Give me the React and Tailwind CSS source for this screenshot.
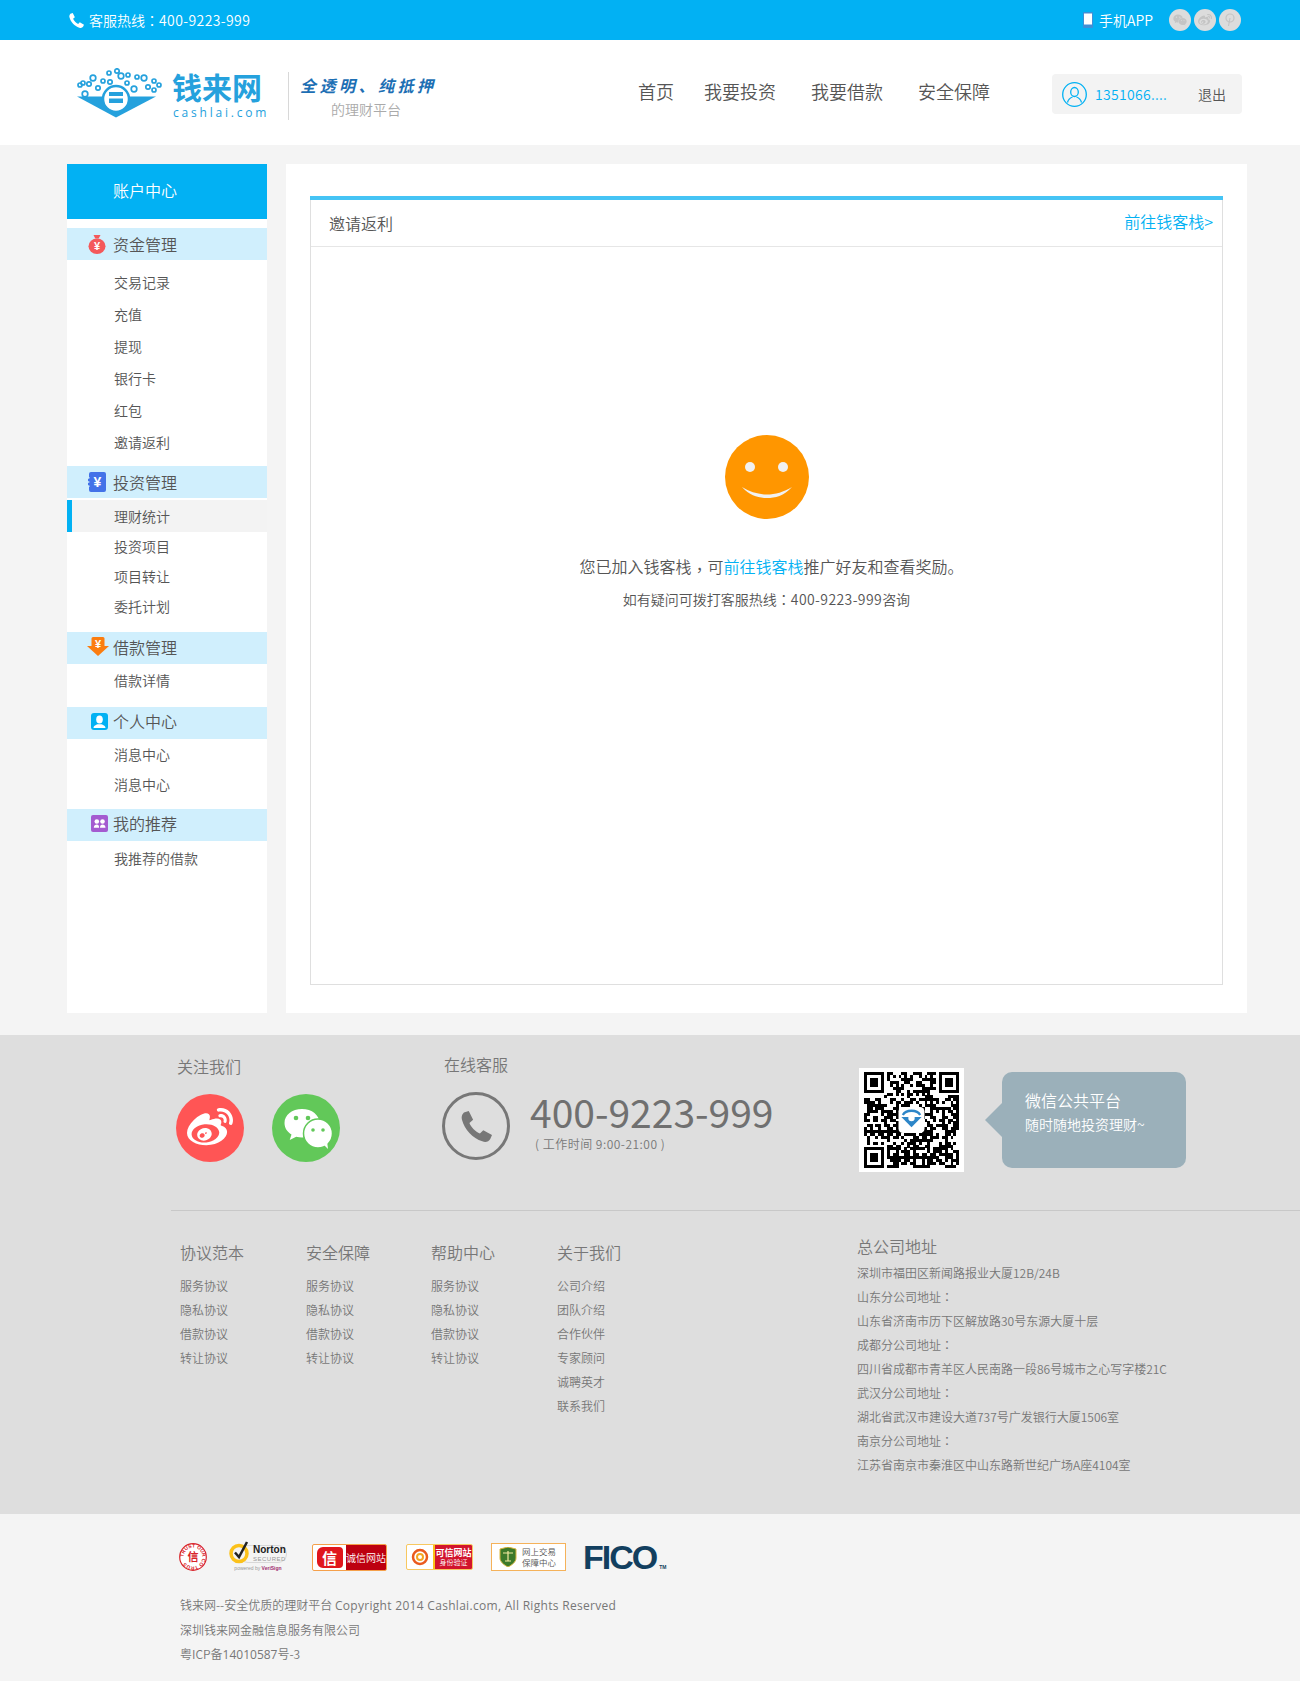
import React from 'react';
import { FaWeibo, FaWeixin } from 'react-icons/fa';

const FONT = "font-['Noto_Sans_CJK_SC','Noto_Sans',sans-serif]";

// 全角标点用 TC 字形，位置才居中
const Zh = ({ children }) => children.split(/([：，])/).map((part, i) => {
  if (part === '：') return <span key={i} className="font-['Noto_Sans_CJK_TC',sans-serif]">{part}</span>;
  if (part === '，') return <span key={i} className="font-['Noto_Sans_CJK_TC',sans-serif] align-[-3px] leading-[0]">{part}</span>;
  return part;
});

const Handset = ({ size, className }) => (
  <svg width={size} height={size} viewBox="0 0 32 32" fill="currentColor" className={className}>
    <path d="M3 1.500L8 0l4.500 9-3.800 3.500C10.500 17 15 21.500 19.500 23.300L23 19.800l9 5-1.800 4.200C28.500 32 25 32.500 22 31.300 12 28 3.500 19 1 9 .2 6 1 3.500 3 1.500z" />
  </svg>
);

const Yen = ({ x, y, size = 11, fill = '#fff' }) => (
  <text x={x} y={y} fontSize={size} fontWeight="700" fill={fill} textAnchor="middle" fontFamily="Liberation Sans, sans-serif">¥</text>
);

const BagIcon = () => (
  <svg width="18" height="20" viewBox="0 0 18 20">
    <path d="M5.500 1h7l-1.800 3.500H7.300z" fill="#f4595b" />
    <ellipse cx="9" cy="12.200" rx="8.500" ry="7.800" fill="#f4595b" />
    <Yen x={9} y={16} />
  </svg>
);

const TicketIcon = () => (
  <svg width="18" height="20" viewBox="0 0 18 20">
    <path d="M3 0h13a2 2 0 0 1 2 2v16a2 2 0 0 1-2 2H3a2 2 0 0 1-2-2v-3l1-1-2-1v-2l2-1-2-1V7l2-1-1-1V2a2 2 0 0 1 2-2z" fill="#4372e8" />
    <Yen x={9.500} y={15} size={14} />
  </svg>
);

const ArrowIcon = () => (
  <svg width="22" height="20" viewBox="0 0 22 20">
    <path d="M4.500 1.500a1.500 1.500 0 0 1 1.500-1.500h10a1.500 1.500 0 0 1 1.500 1.500v7.500h4.500l-11 10-11-10h4.500z" fill="#fb7d10" />
    <Yen x={11} y={11} size={11} />
  </svg>
);

const PersonIcon = () => (
  <svg width="17" height="17" viewBox="0 0 17 17">
    <rect width="17" height="17" rx="3" fill="#02b1f3" />
    <ellipse cx="8.500" cy="6.500" rx="3.300" ry="4" fill="#fff" />
    <path d="M2.500 15c0-2.500 2.500-3 4-3.800h4c1.500.8 4 1.300 4 3.800z" fill="#fff" />
  </svg>
);

const GroupIcon = () => (
  <svg width="17" height="17" viewBox="0 0 17 17">
    <rect width="17" height="17" rx="2" fill="#a45bd0" />
    <circle cx="5.800" cy="6.500" r="2.300" fill="#fff" />
    <circle cx="11.500" cy="6.500" r="2.300" fill="#fff" />
    <path d="M2.800 12.800c0-2.500 1.500-3.300 3-3.300s2.300.8 2.300 3.300zM9 12.800c0-2.500 1-3.300 2.500-3.300s3 .8 3 3.300z" fill="#fff" />
  </svg>
);

const menu = [
  {
    title: '资金管理', icon: <BagIcon />, iconBox: 'w-[18px] ml-[21px] mr-[7px]', head: '', wrap: 'mt-[9px]', list: 'pt-[7px]', row: 'h-8',
    items: ['交易记录', '充值', '提现', '银行卡', '红包', '邀请返利'],
  },
  {
    title: '投资管理', icon: <TicketIcon />, iconBox: 'w-[18px] ml-[21px] mr-[7px]', head: '', wrap: 'mt-[7px]', list: 'pt-[2px]', row: 'h-[30px]',
    items: ['理财统计', '投资项目', '项目转让', '委托计划'], active: '理财统计',
  },
  {
    title: '借款管理', icon: <ArrowIcon />, iconBox: 'w-[22px] ml-[20px] mr-[4px]', head: 'pb-[3px]', wrap: 'mt-[10px]', list: 'pt-[2px]', row: 'h-[30px]',
    items: ['借款详情'],
  },
  {
    title: '个人中心', icon: <PersonIcon />, iconBox: 'w-[17px] ml-[24px] mr-[5px]', head: 'pb-[4px]', wrap: 'mt-[11px]', list: 'pt-[1px]', row: 'h-[30px]',
    items: ['消息中心', '消息中心'],
  },
  {
    title: '我的推荐', icon: <GroupIcon />, iconBox: 'w-[17px] ml-[24px] mr-[5px]', head: 'pb-[4px]', wrap: 'mt-[9px]', list: 'pt-[3px]', row: 'h-[30px]',
    items: ['我推荐的借款'],
  },
];

const Sidebar = () => (
  <aside className="w-[200px] h-[849px] bg-white shrink-0">
    <div className="h-[55px] bg-[#02b1f3] text-white text-base flex items-center pl-[46px] pb-[3px]">账户中心</div>
    {menu.map((g) => (
      <div key={g.title} className={g.wrap}>
        <div className={`h-8 bg-[#d0effd] flex items-center text-base text-[#555] ${g.head}`}>
          <span className={`${g.iconBox} flex items-center`}>{g.icon}</span>
          {g.title}
        </div>
        <div className={g.list}>
          {g.items.map((it, i) => (
            g.active === it ? (
              <div key={i} className="h-8 bg-[#f3f3f3] border-l-[5px] border-[#02b1f3] pl-[42px] flex items-center text-sm text-[#555]">{it}</div>
            ) : (
              <div key={i} className={`${g.row} pl-[47px] pb-[2px] flex items-center text-sm text-[#555]`}>{it}</div>
            )
          ))}
        </div>
      </div>
    ))}
  </aside>
);

const rings = [
  [80, 85, 2], [83, 83, 2], [89, 84, 2.200], [93, 78, 2.800], [98, 88, 2.200], [103, 81, 2], [110, 82, 2.200], [109, 73, 2], [117, 71, 2.200],
  [121, 76, 2.800], [128, 75, 2], [127, 83, 2], [137, 77, 2], [144, 78, 2.800], [134, 89, 2.800], [148, 87, 2.200], [154, 81, 2], [159, 85, 2], [154, 90, 2], [85, 94, 2.800],
];

const Logo = () => (
  <div className="flex items-start">
    <svg width="90" height="52" viewBox="74 68 90 52" className="ml-[7px] mt-[28px] shrink-0">
      {rings.map(([x, y, r], i) => (
        <circle key={i} cx={x} cy={y} r={r} fill="none" stroke="#25a1dd" strokeWidth="1.700" />
      ))}
      <path d="M77 96.500h79l-40 21z" fill="#25a1dd" />
      <circle cx="116" cy="99" r="13" fill="#fff" stroke="#25a1dd" strokeWidth="2.500" />
      <rect x="109" y="92" width="14" height="11" fill="#25a1dd" />
      <rect x="109" y="96" width="14" height="2.500" fill="#fff" />
    </svg>
    <div className="ml-[8px] mt-[30px] w-[92px]">
      <div className="text-[30px] leading-[32px] font-bold text-[#25a1dd] whitespace-nowrap">钱来网</div>
      <div className="mt-[4px] pl-[1px] text-[12px] leading-[14px] tracking-[2.800px] font-normal text-[#25a1dd] font-['Open_Sans',sans-serif] whitespace-nowrap">cashlai.com</div>
    </div>
    <div className="ml-[24px] mt-[32px] w-px h-[48px] bg-[#d8d8d8]" />
    <div className="ml-[11px] mt-[34px]">
      <div className="text-[16px] leading-[22px] font-bold italic tracking-[3.500px] text-[#1d6fb4] whitespace-nowrap">全透明、纯抵押</div>
      <div className="ml-[31px] mt-[3px] text-sm leading-5 text-[#aaa] whitespace-nowrap">的理财平台</div>
    </div>
  </div>
);

const SmallCircle = ({ children }) => (
  <div className="w-[22px] h-[22px] rounded-full bg-[#dcdcdc] flex items-center justify-center text-[#c4c4c4]">{children}</div>
);

const TopBar = () => (
  <div className="h-10 bg-[#02b1f3] text-white text-sm flex items-center justify-between pl-[69px] pr-[59px]">
    <div className="flex items-center">
      <Handset size={15} className="mr-[5px]" />
      <span><Zh>客服热线：</Zh><span className="tracking-[0.400px]">400-9223-999</span></span>
    </div>
    <div className="flex items-center">
      <svg width="10" height="16" viewBox="0 0 10 16" className="mr-[6px]">
        <rect width="10" height="16" rx="1" fill="#3f8fd6" />
        <rect x="1" y="1.500" width="8" height="11" fill="#fff" />
      </svg>
      <span className="mr-[16px]">手机APP</span>
      <div className="flex gap-[3px]">
        <SmallCircle><FaWeixin size={14} /></SmallCircle>
        <SmallCircle><FaWeibo size={14} /></SmallCircle>
        <SmallCircle>
          <svg width="12" height="16" viewBox="0 0 12 16" fill="none" stroke="#c4c4c4" strokeWidth="1.200">
            <circle cx="6" cy="6" r="4" />
            <path d="M6 6l-1.500 8" />
          </svg>
        </SmallCircle>
      </div>
    </div>
  </div>
);

const Header = () => (
  <div className="h-[105px] bg-white flex justify-between pl-[67px] pr-[58px]">
    <Logo />
    <div className="flex items-center">
      <nav className="flex text-lg text-[#555] mr-[62px] -mt-[4px]">
        <span>首页</span>
        <span className="ml-[30px]">我要投资</span>
        <span className="ml-[35px]">我要借款</span>
        <span className="ml-[35px]">安全保障</span>
      </nav>
      <div className="w-[190px] h-10 bg-[#f3f3f3] rounded flex items-center pl-[10px] mt-[3px]">
        <svg width="25" height="25" viewBox="0 0 25 25" fill="none" stroke="#02b1f3" strokeWidth="1.300" className="shrink-0">
          <circle cx="12.500" cy="12.500" r="11.800" />
          <ellipse cx="12.500" cy="10" rx="3.800" ry="4.500" />
          <path d="M5.500 20.500c.8-3.500 3.500-5 5-5.500M19.500 20.500c-.8-3.500-3.500-5-5-5.500" />
        </svg>
        <span className="ml-[8px] text-sm text-[#02b1f3] tracking-[0.300px] w-[103px] whitespace-nowrap">1351066....</span>
        <span className="text-sm text-[#555]">退出</span>
      </div>
    </div>
  </div>
);

const Smiley = () => (
  <svg width="84" height="84" viewBox="0 0 84 84">
    <circle cx="42" cy="42" r="42" fill="#ff9600" />
    <circle cx="25" cy="32" r="5" fill="#f1f1f1" />
    <circle cx="58" cy="32" r="5" fill="#f1f1f1" />
    <path d="M17 52c8 9 17 11 25 11s17-2 25-11c-8 5-17 7.500-25 7.500s-17-2.500-25-7.500z" fill="#f1f1f1" />
  </svg>
);

const Content = () => (
  <main className="w-[961px] h-[849px] bg-white pt-8 pl-[24px]">
    <div className="w-[913px] h-[789px] border border-[#dfdfdf] border-t-0">
      <div className="h-1 -mx-px bg-[#45c4f5]" />
      <div className="h-[47px] border-b border-[#e6e6e6] flex justify-between pl-[18px] pr-[9px]">
        <span className="text-base text-[#555] mt-[12px] leading-[22px]">邀请返利</span>
        <span className="text-base text-[#02b1f3] mt-[10px] leading-[22px]">前往钱客栈&gt;</span>
      </div>
      <div className="flex flex-col items-center pt-[188px]">
        <Smiley />
        <p className="mt-[35px] ml-[10px] text-base leading-6 text-[#555]">
          <Zh>您已加入钱客栈，可</Zh><span className="text-[#02b1f3]">前往钱客栈</span>推广好友和查看奖励。
        </p>
        <p className="mt-[10px] text-sm leading-[22px] text-[#555]">
          <Zh>如有疑问可拨打客服热线：</Zh><span className="tracking-[0.400px]">400-9223-999</span>咨询
        </p>
      </div>
    </div>
  </main>
);

const WeChatMark = () => (
  <svg width="68" height="68" viewBox="0 0 68 68">
    <circle cx="34" cy="34" r="34" fill="#62c859" />
    <path d="M30 15c-10 0-17.500 6-17.500 14 0 5 2.800 9 7 11.500l-1.800 5.500 6.500-3.300c2 .5 3.800.8 5.800.8 10 0 17.500-6 17.500-14.200S40 15 30 15z" fill="#fff" />
    <circle cx="46" cy="39.500" r="14.500" fill="#fff" stroke="#62c859" strokeWidth="1.500" />
    <path d="M51 50l5 5-1-8z" fill="#fff" />
    <circle cx="24" cy="24" r="2.300" fill="#62c859" />
    <circle cx="36" cy="24" r="2.300" fill="#62c859" />
    <circle cx="41" cy="36" r="1.800" fill="#62c859" />
    <circle cx="51" cy="36" r="1.800" fill="#62c859" />
  </svg>
);

// 二维码，图案只求观感接近
const QR_N = 33;
const isFinder = (x, y) => (x < 8 && y < 8) || (x >= QR_N - 8 && y < 8) || (x < 8 && y >= QR_N - 8);

const QrCode = () => {
  const cells = [];
  for (let y = 0; y < QR_N; y++) {
    for (let x = 0; x < QR_N; x++) {
      if (isFinder(x, y)) continue;
      const h = (x * 7919 + y * 104729 + x * y * 31 + ((x ^ y) * 577)) % 97;
      if (h % 2 === 0 || h % 7 === 0) cells.push(<rect key={`${x}-${y}`} x={x} y={y} width="1.020" height="1.020" />);
    }
  }
  const finder = (x, y) => (
    <g key={`${x}${y}`}>
      <rect x={x} y={y} width="7" height="7" />
      <rect x={x + 1} y={y + 1} width="5" height="5" fill="#fff" />
      <rect x={x + 2} y={y + 2} width="3" height="3" />
    </g>
  );
  return (
    <svg width="105" height="104" viewBox="-1.500 -1.500 36 36" className="bg-white shrink-0 mt-[33px]" shapeRendering="crispEdges">
      {cells}
      {finder(0, 0)}
      {finder(QR_N - 7, 0)}
      {finder(0, QR_N - 7)}
      <g shapeRendering="auto">
        <rect x="12" y="12" width="9" height="9" rx="1.500" fill="#fff" />
        <path d="M13 15.500h7l-3.500 3.500z" fill="#2d86c8" />
        <path d="M13.500 14.800c1-2 5-2 6 0" fill="none" stroke="#2d86c8" strokeWidth="0.800" />
        <circle cx="16.500" cy="15.800" r="1.100" fill="#fff" />
      </g>
    </svg>
  );
};

const linkCols = [
  { title: '协议范本', w: 'w-[126px]', links: ['服务协议', '隐私协议', '借款协议', '转让协议'] },
  { title: '安全保障', w: 'w-[125px]', links: ['服务协议', '隐私协议', '借款协议', '转让协议'] },
  { title: '帮助中心', w: 'w-[126px]', links: ['服务协议', '隐私协议', '借款协议', '转让协议'] },
  { title: '关于我们', w: 'w-[126px]', links: ['公司介绍', '团队介绍', '合作伙伴', '专家顾问', '诚聘英才', '联系我们'] },
];

const addresses = [
  '深圳市福田区新闻路报业大厦12B/24B',
  '山东分公司地址：',
  '山东省济南市历下区解放路30号东源大厦十层',
  '成都分公司地址：',
  '四川省成都市青羊区人民南路一段86号城市之心写字楼21C',
  '武汉分公司地址：',
  '湖北省武汉市建设大道737号广发银行大厦1506室',
  '南京分公司地址：',
  '江苏省南京市秦淮区中山东路新世纪广场A座4104室',
];

const FooterMain = () => (
  <div className="h-[479px] bg-[#dedede] text-[#777]">
    <div className="h-[175px] flex pl-[176px]">
      <div className="w-[268px] pt-[19px]">
        <div className="text-base leading-6 pl-px">关注我们</div>
        <div className="flex gap-[28px] mt-[16px]">
          <div className="w-[68px] h-[68px] rounded-full bg-[#ff5555] flex items-center justify-center text-white">
            <FaWeibo size={46} />
          </div>
          <WeChatMark />
        </div>
      </div>
      <div className="w-[415px] pt-[17px]">
        <div className="text-base leading-6">在线客服</div>
        <div className="flex mt-[16px] -ml-[2px]">
          <div className="w-[68px] h-[68px] rounded-full border-[3px] border-[#777] flex items-center justify-center shrink-0">
            <Handset size={31} />
          </div>
          <div className="ml-[20px]">
            <div className="text-[39px] leading-[40px] -mt-[1px] font-normal text-[#707070] whitespace-nowrap">400-9223-999</div>
            <div className="text-xs leading-4 mt-[5px] pl-[5px] tracking-[0.500px] whitespace-nowrap">( 工作时间 9:00-21:00 )</div>
          </div>
        </div>
      </div>
      <QrCode />
      <div className="relative ml-[38px] mt-[37px] w-[184px] h-[96px] bg-[#9bb0ba] rounded-[10px] pl-[23px] pt-[16px] text-white">
        <div className="absolute -left-[12px] top-[36px] w-6 h-6 bg-[#9bb0ba] rotate-45" />
        <div className="relative text-base leading-6">微信公共平台</div>
        <div className="relative text-sm leading-6">随时随地投资理财~</div>
      </div>
    </div>
    <div className="ml-[171px] h-px bg-[#c8c8c8]" />
    <div className="flex pl-[180px]">
      <div className="w-[677px] flex pt-[29px]">
        {linkCols.map((col) => (
          <div key={col.title} className={col.w}>
            <div className="text-base leading-6 mb-[10px]">{col.title}</div>
            {col.links.map((l, i) => <div key={i} className="text-xs leading-6">{l}</div>)}
          </div>
        ))}
      </div>
      <div className="pt-[23px]">
        <div className="text-base leading-6 mb-[3px]">总公司地址</div>
        {addresses.map((a, i) => <div key={i} className="text-xs leading-6 whitespace-nowrap"><Zh>{a}</Zh></div>)}
      </div>
    </div>
  </div>
);

const Stamp = () => (
  <svg width="28" height="28" viewBox="0 0 28 28" className="shrink-0">
    <circle cx="14" cy="14" r="13.300" fill="#fff" stroke="#d8232a" strokeWidth="1.200" />
    <defs>
      <path id="stampRing" d="M14 14m-9.400 0a9.400 9.400 0 1 1 18.800 0a9.400 9.400 0 1 1-18.800 0" />
    </defs>
    <text fontSize="5" fontWeight="700" fill="#d8232a" fontFamily="Liberation Sans, sans-serif">
      <textPath href="#stampRing">TRUST OUR CO TRUS</textPath>
    </text>
    <text x="14" y="18" fontSize="11" fontWeight="700" fill="#d8232a" textAnchor="middle">信</text>
  </svg>
);

const Norton = () => (
  <div className="flex flex-col w-[58px] ml-[22px] shrink-0">
    <div className="relative flex items-center h-[22px]">
      <div className="absolute left-[10px] top-[3px] w-[48px] h-[18px] rounded-full border border-[#d8d8d8]" />
      <svg width="23" height="24" viewBox="0 0 23 24" className="relative shrink-0 -mt-[2px]">
        <circle cx="10" cy="13.500" r="8" fill="#f3f3f3" stroke="#fbc11a" strokeWidth="3.500" />
        <path d="M6 12.500l4 4.500 8-15" fill="none" stroke="#222" strokeWidth="2.500" />
      </svg>
      <div className="relative ml-[1px]">
        <div className="text-[10px] leading-[11px] font-bold text-[#222] font-['Liberation_Sans',sans-serif]">Norton</div>
        <div className="text-[6px] leading-[8px] tracking-[0.500px] text-[#999] font-['Liberation_Sans',sans-serif]">SECURED</div>
      </div>
    </div>
    <div className="text-[5px] leading-[8px] text-[#999] text-center whitespace-nowrap font-['Liberation_Sans',sans-serif]">powered by <span className="text-[#a02b6e] font-bold">VeriSign</span></div>
  </div>
);

const Badges = () => (
  <div className="flex items-center h-[30px]">
    <Stamp />
    <Norton />
    <div className="ml-[25px] w-[75px] h-[27px] rounded-[2px] border border-[#f5a04a] flex overflow-hidden shrink-0 bg-white">
      <div className="w-[33px] flex items-center justify-center">
        <span className="w-[26px] h-[21px] rounded-l-md rounded-r-sm bg-[#e0161d] text-white text-[15px] leading-[21px] text-center font-bold">信</span>
      </div>
      <div className="flex-1 bg-[#bd0010] text-white text-[10px] flex items-center justify-center whitespace-nowrap">诚信网站</div>
    </div>
    <div className="ml-[19px] w-[67px] h-[26px] rounded-[2px] border border-[#f7c860] flex overflow-hidden shrink-0 bg-white">
      <div className="w-[28px] flex items-center justify-center border-r-2 border-[#fbc11a]">
        <svg width="18" height="18" viewBox="0 0 18 18">
          <circle cx="9" cy="9" r="7" fill="none" stroke="#ea5a1e" strokeWidth="2.500" />
          <circle cx="9" cy="9" r="3" fill="none" stroke="#f5a623" strokeWidth="2" />
        </svg>
      </div>
      <div className="flex-1 bg-[#d2142c] text-white flex flex-col items-center justify-center">
        <span className="text-[9px] leading-[11px] font-bold whitespace-nowrap">可信网站</span>
        <span className="text-[7px] leading-[9px] whitespace-nowrap">身份验证</span>
      </div>
    </div>
    <div className="ml-[18px] w-[75px] h-[28px] border border-[#f5b25a] flex items-center bg-white shrink-0">
      <svg width="18" height="20" viewBox="0 0 18 20" className="ml-[7px] shrink-0">
        <path d="M1 2l8-2 8 2v9c0 4-4 7-8 9-4-2-8-5-8-9z" fill="#3c7a2a" stroke="#d8b640" strokeWidth="1" />
        <path d="M4 6h10M9 4v10M6 14h6" stroke="#f3e9a0" strokeWidth="1.200" />
      </svg>
      <div className="ml-[5px] text-[8.500px] leading-[11px] text-[#555] whitespace-nowrap">
        <div>网上交易</div>
        <div>保障中心</div>
      </div>
    </div>
    <div className="ml-[17px] text-[34px] leading-[30px] font-bold tracking-[-2px] text-[#123f5f] font-['Liberation_Sans',sans-serif] flex items-end">
      FICO<span className="text-[5px] leading-[10px] tracking-normal ml-[3px]">TM</span>
    </div>
  </div>
);

const FooterBottom = () => (
  <div className="h-[167px] bg-[#f4f4f4] pt-[28px] pl-[179px]">
    <Badges />
    <div className="mt-[21px] pl-px text-xs leading-6 text-[#777]">
      <div>钱来网--安全优质的理财平台 <span className="font-normal tracking-[0.300px] font-['Open_Sans',sans-serif]">Copyright 2014 Cashlai.com, All Rights Reserved</span></div>
      <div>深圳钱来网金融信息服务有限公司</div>
      <div>粤ICP备<span className="font-normal font-['Open_Sans',sans-serif]">14010587</span>号-3</div>
    </div>
  </div>
);

export default function App() {
  return (
    <div className={`w-[1300px] min-h-[1681px] bg-[#f4f4f4] font-[350] ${FONT}`}>
      <TopBar />
      <Header />
      <div className="flex gap-[19px] pl-[67px] pt-[19px] pb-[22px]">
        <Sidebar />
        <Content />
      </div>
      <FooterMain />
      <FooterBottom />
    </div>
  );
}
